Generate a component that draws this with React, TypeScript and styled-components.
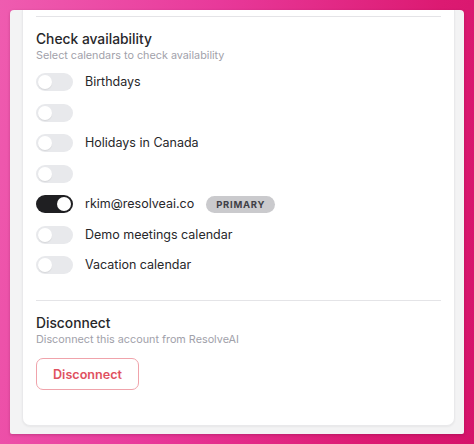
import React, { useState } from "react";
import styled, { createGlobalStyle } from "styled-components";

const GlobalStyle = createGlobalStyle`
  html, body {
    margin: 0;
    padding: 0;
  }
  body {
    width: 474px;
    height: 444px;
    overflow: hidden;
    background: linear-gradient(100deg, #ef5cb0 0%, #e8399a 40%, #dc1a72 80%, #d5136a 100%);
    font-family: Inter, "Noto Sans", "Liberation Sans", sans-serif;
    -webkit-font-smoothing: antialiased;
  }
`;

type Calendar = { id: string; name: string; on: boolean; primary?: boolean };

const initial: Calendar[] = [
  { id: "birthdays", name: "Birthdays", on: false },
  { id: "blank1", name: "", on: false },
  { id: "holidays", name: "Holidays in Canada", on: false },
  { id: "blank2", name: "", on: false },
  { id: "rkim", name: "rkim@resolveai.co", on: true, primary: true },
  { id: "demo", name: "Demo meetings calendar", on: false },
  { id: "vacation", name: "Vacation calendar", on: false },
];

export default function App() {
  const [calendars, setCalendars] = useState<Calendar[]>(initial);

  const toggle = (id: string) =>
    setCalendars((list) =>
      list.map((c) => (c.id === id ? { ...c, on: !c.on } : c))
    );

  return (
    <>
      <GlobalStyle />
      <Window>
        <Card>
          <Divider />
          <Section>
            <Title>Check availability</Title>
            <Subtitle>Select calendars to check availability</Subtitle>
            <List>
              {calendars.map((c) => (
                <Row key={c.id}>
                  <Switch
                    type="button"
                    $on={c.on}
                    aria-pressed={c.on}
                    onClick={() => toggle(c.id)}
                  >
                    <Knob $on={c.on} />
                  </Switch>
                  {c.name && <Label>{c.name}</Label>}
                  {c.primary && <Badge>PRIMARY</Badge>}
                </Row>
              ))}
            </List>
          </Section>
          <Divider $gap={25} />
          <Section>
            <Title>Disconnect</Title>
            <Subtitle>Disconnect this account from ResolveAI</Subtitle>
            <DangerButton type="button">Disconnect</DangerButton>
          </Section>
        </Card>
      </Window>
    </>
  );
}

const Window = styled.div`
  margin: 10px 10px 0 10px;
  width: 454px;
  height: 424px;
  box-sizing: border-box;
  padding: 0 9px 8px 12px;
  background: #f3f3f4;
  border-radius: 4px 4px 2px 2px;
  overflow: hidden;
  box-shadow: 0 1px 3px rgba(80, 0, 40, 0.25);
`;

const Card = styled.div`
  height: 100%;
  box-sizing: border-box;
  background: #ffffff;
  border: 1px solid #e9e9eb;
  border-top: none;
  border-radius: 0 0 8px 8px;
  padding: 6px 13px 0 13px;
  box-shadow: 0 1px 2px rgba(0, 0, 0, 0.05);
`;

const Divider = styled.div<{ $gap?: number }>`
  height: 1px;
  background: #e4e4e7;
  margin-top: ${(p) => p.$gap ?? 0}px;
`;

const Section = styled.div`
  display: flex;
  flex-direction: column;
  align-items: flex-start;
  padding-top: 13px;
`;

const Title = styled.div`
  font-size: 13.8px;
  font-weight: 500;
  line-height: 18px;
  color: #27272a;
`;

const Subtitle = styled.div`
  font-size: 10.8px;
  line-height: 16px;
  color: #a1a1aa;
`;

const List = styled.div`
  display: flex;
  flex-direction: column;
  gap: 10.5px;
  margin-top: 8px;
`;

const Row = styled.div`
  display: flex;
  align-items: center;
  gap: 12px;
  height: 20px;
`;

const Switch = styled.button<{ $on: boolean }>`
  position: relative;
  width: 37px;
  height: 18px;
  padding: 0;
  border: none;
  border-radius: 9px;
  background: ${(p) => (p.$on ? "#1f1f22" : "#e8e9ec")};
  cursor: pointer;
  flex-shrink: 0;
`;

const Knob = styled.span<{ $on: boolean }>`
  position: absolute;
  top: 2px;
  left: ${(p) => (p.$on ? "21px" : "2px")};
  width: 14px;
  height: 14px;
  border-radius: 50%;
  background: #ffffff;
  box-shadow: 0 1px 1px rgba(0, 0, 0, 0.08);
`;

const Label = styled.span`
  font-size: 12.5px;
  line-height: 18px;
  color: #27272a;
`;

const Badge = styled.span`
  display: inline-flex;
  align-items: center;
  height: 17px;
  padding: 0 10px;
  border-radius: 9px;
  background: #cacacd;
  color: #3f3f46;
  font-size: 9.5px;
  font-weight: 700;
  letter-spacing: 0.7px;
`;

const DangerButton = styled.button`
  margin-top: 10px;
  height: 32px;
  padding: 0 16px;
  background: #ffffff;
  border: 1px solid #f0a3ab;
  border-radius: 7px;
  color: #e0515f;
  font-family: inherit;
  font-size: 12.6px;
  font-weight: 600;
  cursor: pointer;
`;
